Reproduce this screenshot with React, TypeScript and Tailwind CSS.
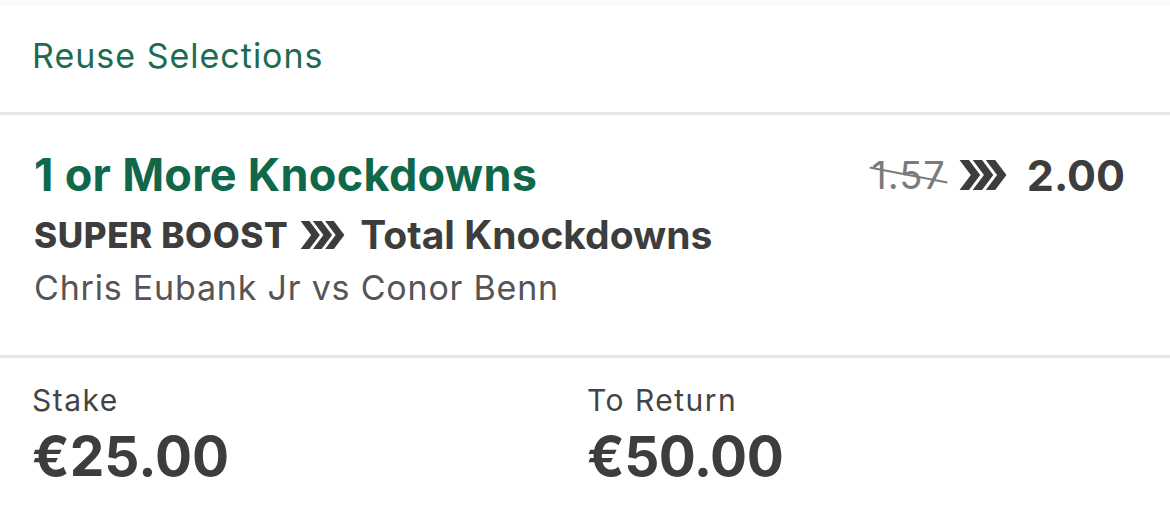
import React from "react";

function Chevrons({ className }: { className?: string }) {
    return (
        <svg viewBox="0 0 50 32" className={className} fill="currentColor">
            <polygon points="0,0 10,0 22,16 10,32 0,32 12,16" />
            <polygon points="14,0 24,0 36,16 24,32 14,32 26,16" />
            <polygon points="28,0 38,0 50,16 38,32 28,32 40,16" />
        </svg>
    );
}

export default function App() {
    const font = { fontFamily: "Inter, Roboto, 'Liberation Sans', sans-serif" };
    return (
        <div className="w-[1170px] h-[509px] bg-white overflow-hidden" style={font}>
            <div className="h-[6px] bg-[#fafafa]" />
            <div className="h-[106px] flex items-center px-[32px] pb-[7px]">
                <span className="text-[34px] leading-[40px] tracking-[1px] text-[#1c6c52]">Reuse Selections</span>
            </div>
            <div className="h-[3px] bg-[#e6e6e6]" />

            <div className="h-[240px] px-[34px] pt-[34px]">
                <div className="flex items-center justify-between h-[52px]">
                    <div className="text-[45px] leading-[52px] tracking-[0.3px] font-bold text-[#10684a]">1 or More Knockdowns</div>
                    <div className="flex items-center pr-[11px]">
                        <span className="relative text-[38px] tracking-[1px] text-[#7b7b7b] leading-[44px]">
                            1.57
                            <span className="absolute left-[-2px] right-[-3px] top-[21px] h-[2px] bg-[#7b7b7b] rotate-[11deg]" />
                        </span>
                        <Chevrons className="ml-[12px] w-[50px] h-[30px] text-[#3d3d3d]" />
                        <span className="ml-[19px] text-[43px] font-bold text-[#3d3d3d] leading-[52px]">2.00</span>
                    </div>
                </div>
                <div className="flex items-center mt-[11px] h-[46px] text-[#3d3d3d]">
                    <span className="text-[35px] leading-[46px] font-extrabold tracking-[0.6px]">SUPER BOOST</span>
                    <Chevrons className="ml-[12px] w-[45px] h-[28px]" />
                    <span className="ml-[15px] text-[39px] leading-[46px] font-bold">Total Knockdowns</span>
                </div>
                <div className="mt-[10px] text-[34px] leading-[40px] tracking-[0.8px] text-[#555555]">Chris Eubank Jr vs Conor Benn</div>
            </div>
            <div className="h-[3px] bg-[#e6e6e6]" />

            <div className="grid grid-cols-[555px_1fr] px-[32px] pt-[22px]">
                <div>
                    <div className="text-[30px] leading-[40px] tracking-[1.5px] text-[#444444]">Stake</div>
                    <div className="mt-[4px] text-[55px] leading-[64px] font-bold text-[#3d3d3d]">€25.00</div>
                </div>
                <div>
                    <div className="text-[30px] leading-[40px] tracking-[1.5px] text-[#444444]">To Return</div>
                    <div className="mt-[4px] text-[55px] leading-[64px] font-bold tracking-[-0.5px] text-[#3d3d3d]">€50.00</div>
                </div>
            </div>
        </div>
    );
}
